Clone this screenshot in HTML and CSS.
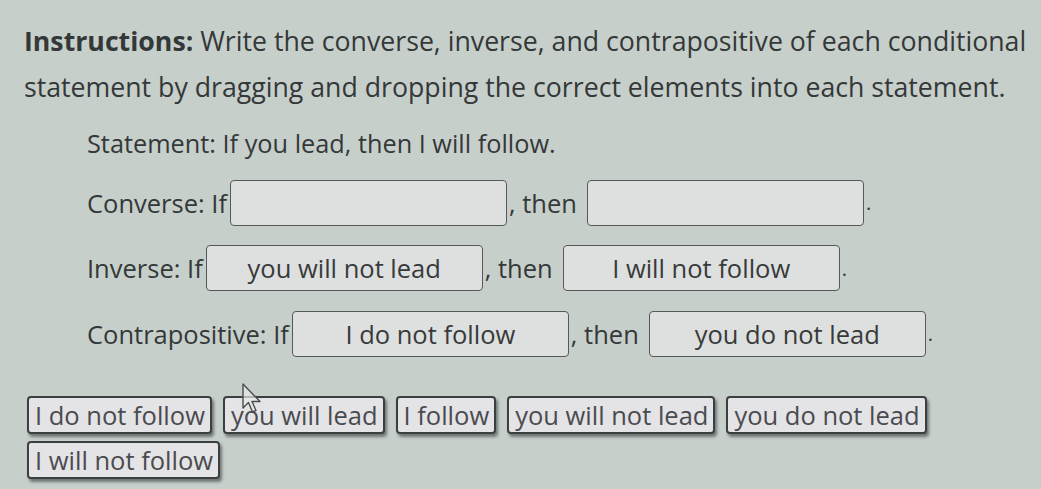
FILE: index.html
```html
<!DOCTYPE html>
<html>
<head>
<meta charset="utf-8">
<link rel="stylesheet" href="styles.css">
</head>
<body>
<div class="page">
  <p class="instructions"><b>Instructions: </b><span>Write the converse, inverse, and contrapositive of each conditional</span><span class="line">statement by dragging and dropping the correct elements into each statement.</span></p>
  <div class="problem">
    <div class="statement">Statement: If you lead, then I will follow.</div>
    <div class="row">
      <span class="label">Converse: If</span>
      <span class="drop"></span>
      <span class="sep">, then</span>
      <span class="drop"></span>
      <span class="dot">.</span>
    </div>
    <div class="row">
      <span class="label">Inverse: If</span>
      <span class="drop">you will not lead</span>
      <span class="sep">, then</span>
      <span class="drop">I will not follow</span>
      <span class="dot">.</span>
    </div>
    <div class="row">
      <span class="label">Contrapositive: If</span>
      <span class="drop">I do not follow</span>
      <span class="sep">, then</span>
      <span class="drop">you do not lead</span>
      <span class="dot">.</span>
    </div>
  </div>
  <div class="bank">
    <span class="chip">I do not follow</span>
    <span class="chip">you will lead</span>
    <span class="chip">I follow</span>
    <span class="chip">you will not lead</span>
    <span class="chip">you do not lead</span>
    <span class="chip">I will not follow</span>
  </div>
  <svg class="cursor" width="24" height="34" viewBox="0 0 24 34"><path d="M2 2 L2 26 L7.5 20.5 L11.5 30 L15 28.5 L11 19.5 L19 19.5 Z" fill="#e6e8e7" fill-opacity="0.7" stroke="#4a4d4d" stroke-width="1.4" stroke-linejoin="round"/></svg>
</div>
</body>
</html>
```

FILE: styles.css
```css
html, body {
  margin: 0;
  padding: 0;
}
body {
  background: #c7cfcb;
  font-family: "Open Sans", "Noto Sans", sans-serif;
  color: #343838;
}
.page {
  position: relative;
  width: 1041px;
  height: 489px;
  padding: 18px 6px 0 24px;
  box-sizing: border-box;
  overflow: hidden;
}
.instructions {
  margin: 0;
  font-size: 26.7px;
  line-height: 46px;
  white-space: nowrap;
}
.instructions b {
  font-weight: 700;
}
.instructions .line {
  display: block;
}
.problem {
  padding-left: 63px;
  font-size: 25.5px;
}
.statement {
  margin-top: 13px;
  height: 40px;
  line-height: 40px;
  font-size: 25.3px;
}
.row {
  display: flex;
  align-items: center;
  height: 65.5px;
}
.statement + .row {
  margin-top: 7px;
}
.label {
  margin-right: 3px;
}
.drop {
  box-sizing: border-box;
  width: 277px;
  height: 46px;
  border: 1.5px solid #575958;
  border-radius: 4px;
  background: #dde0df;
  display: flex;
  align-items: center;
  justify-content: center;
  font-size: 25.5px;
  color: #383a3a;
}
.sep {
  margin: 0 10px 0 2px;
  font-size: 25.5px;
}
.dot {
  margin-left: 2px;
  font-size: 20px;
}
.bank {
  margin-top: 29px;
  display: flex;
  flex-wrap: wrap;
  gap: 7px 11px;
  padding-left: 3px;
  width: 960px;
}
.chip {
  box-sizing: border-box;
  height: 38px;
  padding: 0 5px 0 6px;
  display: flex;
  align-items: center;
  background: #e4e3e5;
  border: 2px solid #3c3f3f;
  border-radius: 4px;
  box-shadow: 2px 3px 3px rgba(40, 45, 45, 0.55);
  font-size: 25.5px;
  color: #4a4b50;
}
.cursor {
  position: absolute;
  left: 241px;
  top: 382px;
}
```
